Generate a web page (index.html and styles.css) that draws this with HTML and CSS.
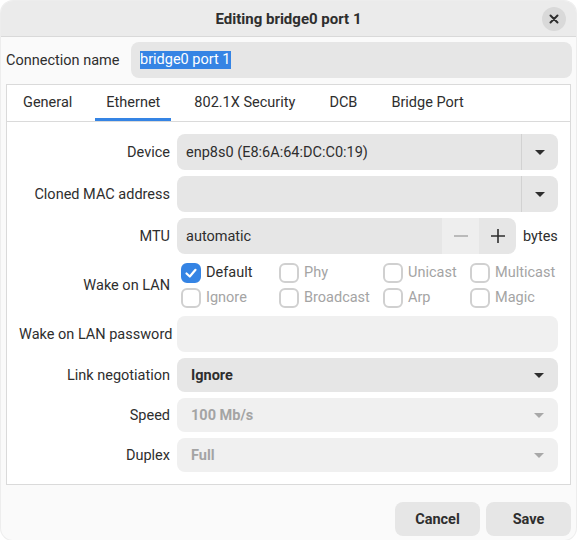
FILE: index.html
```html
<!DOCTYPE html>
<html>
<head>
<meta charset="utf-8">
<link rel="stylesheet" href="styles.css">
</head>
<body>
<div class="window">
  <header class="titlebar">
    <span class="title">Editing bridge0 port 1</span>
    <button class="close" aria-label="Close">
      <svg width="10" height="10" viewBox="0 0 10 10"><path d="M1.5 1.5 L8.5 8.5 M8.5 1.5 L1.5 8.5" stroke="#2e2e2e" stroke-width="2" stroke-linecap="round"/></svg>
    </button>
  </header>
  <div class="content">
    <div class="name-row">
      <span class="label">Connection name</span>
      <div class="entry"><span class="selection">bridge0 port 1</span></div>
    </div>
    <div class="notebook">
      <nav class="tabs">
        <span class="tab">General</span>
        <span class="tab active">Ethernet</span>
        <span class="tab">802.1X Security</span>
        <span class="tab">DCB</span>
        <span class="tab">Bridge Port</span>
      </nav>
      <div class="page">
        <span class="row-label">Device</span>
        <div class="combo">
          <span class="combo-text">enp8s0 (E8:6A:64:DC:C0:19)</span>
          <span class="combo-btn"><svg width="10" height="5" viewBox="0 0 10 5"><path d="M0 0 L10 0 L5 5 Z" fill="#2e2e2e"/></svg></span>
        </div>

        <span class="row-label">Cloned MAC address</span>
        <div class="combo">
          <span class="combo-text"></span>
          <span class="combo-btn"><svg width="10" height="5" viewBox="0 0 10 5"><path d="M0 0 L10 0 L5 5 Z" fill="#2e2e2e"/></svg></span>
        </div>

        <span class="row-label">MTU</span>
        <div class="mtu-row">
          <div class="spin">
            <span class="spin-text">automatic</span>
            <span class="spin-btn minus"><svg width="16" height="16" viewBox="0 0 16 16"><path d="M1 8 H15" stroke="#a8a8a8" stroke-width="1.6"/></svg></span>
            <span class="spin-btn plus"><svg width="16" height="16" viewBox="0 0 16 16"><path d="M1 8 H15 M8 1 V15" stroke="#2e2e2e" stroke-width="1.6"/></svg></span>
          </div>
          <span class="unit">bytes</span>
        </div>

        <span class="row-label">Wake on LAN</span>
        <div class="wol">
          <label class="check"><span class="box checked"><svg width="14" height="14" viewBox="0 0 14 14"><path d="M2.5 7.5 L5.8 10.5 L11.5 3.8" fill="none" stroke="#fff" stroke-width="2.2" stroke-linecap="round" stroke-linejoin="round"/></svg></span><span class="ctext">Default</span></label>
          <label class="check dis"><span class="box"></span><span class="ctext">Phy</span></label>
          <label class="check dis"><span class="box"></span><span class="ctext">Unicast</span></label>
          <label class="check dis"><span class="box"></span><span class="ctext">Multicast</span></label>
          <label class="check dis"><span class="box"></span><span class="ctext">Ignore</span></label>
          <label class="check dis"><span class="box"></span><span class="ctext">Broadcast</span></label>
          <label class="check dis"><span class="box"></span><span class="ctext">Arp</span></label>
          <label class="check dis"><span class="box"></span><span class="ctext">Magic</span></label>
        </div>

        <span class="row-label">Wake on LAN password</span>
        <div class="entry-field disabled"></div>

        <span class="row-label">Link negotiation</span>
        <div class="dropdown">
          <span class="dd-text">Ignore</span>
          <svg width="10" height="5" viewBox="0 0 10 5"><path d="M0 0 L10 0 L5 5 Z" fill="#2e2e2e"/></svg>
        </div>

        <span class="row-label">Speed</span>
        <div class="dropdown disabled">
          <span class="dd-text">100 Mb/s</span>
          <svg width="10" height="5" viewBox="0 0 10 5"><path d="M0 0 L10 0 L5 5 Z" fill="#a8a8a8"/></svg>
        </div>

        <span class="row-label">Duplex</span>
        <div class="dropdown disabled">
          <span class="dd-text">Full</span>
          <svg width="10" height="5" viewBox="0 0 10 5"><path d="M0 0 L10 0 L5 5 Z" fill="#a8a8a8"/></svg>
        </div>
      </div>
    </div>
    <div class="actions">
      <button class="btn">Cancel</button>
      <button class="btn">Save</button>
    </div>
  </div>
</div>
</body>
</html>
```

FILE: styles.css
```css
html, body {
  margin: 0;
  padding: 0;
  background: #ffffff;
}

body {
  font-family: Roboto, "Open Sans", sans-serif;
  font-size: 14.5px;
  color: #2e2e2e;
}

.window {
  margin: 1px 1px 0 1px;
  width: 575px;
  height: 539px;
  border-radius: 12px;
  overflow: hidden;
  background: #fafafa;
  box-shadow: 0 0 0 1px rgba(0, 0, 0, 0.07);
  display: flex;
  flex-direction: column;
}

.titlebar {
  height: 35px;
  flex: 0 0 35px;
  background: #ebebeb;
  border-bottom: 1px solid #d9d9d9;
  display: flex;
  align-items: center;
  justify-content: center;
  position: relative;
}

.title {
  font-weight: 700;
  font-size: 15px;
  color: #2e2e2e;
}

.close {
  position: absolute;
  right: 10px;
  top: 6px;
  width: 24px;
  height: 24px;
  border-radius: 50%;
  border: none;
  background: #d9d9d9;
  display: flex;
  align-items: center;
  justify-content: center;
  padding: 0;
}

.content {
  padding: 5px 5px 0 5px;
  display: flex;
  flex-direction: column;
}

.name-row {
  display: grid;
  grid-template-columns: 125px 1fr;
  align-items: center;
  height: 36px;
}

.label {
  white-space: nowrap;
}

.entry {
  height: 36px;
  border-radius: 8px;
  background: #e6e6e6;
  margin-right: -1px;
  display: flex;
  align-items: center;
  padding-left: 9px;
}

.selection {
  background: #3584e4;
  color: #ffffff;
  line-height: 18px;
  padding: 0;
}

.notebook {
  margin-top: 6px;
  border: 1px solid #dadada;
  background: #ffffff;
}

.tabs {
  display: flex;
  height: 36px;
  border-bottom: 1px solid #dadada;
  padding-left: 5px;
  gap: 12px;
}

.tab {
  padding: 0 11px;
  display: flex;
  align-items: center;
  box-sizing: border-box;
  height: 36px;
  border-bottom: 3px solid transparent;
  padding-top: 2px;
  color: #2e2e2e;
}

.tab.active {
  border-bottom-color: #3584e4;
}

.page {
  padding: 12px;
  display: grid;
  grid-template-columns: 151px 1fr;
  column-gap: 7px;
  row-gap: 6px;
  align-items: center;
}

.row-label {
  text-align: right;
  white-space: nowrap;
}

.combo {
  height: 36px;
  border-radius: 8px;
  background: #e6e6e6;
  display: flex;
  align-items: center;
}

.combo-text {
  flex: 1;
  padding-left: 9px;
}

.combo-btn {
  width: 37px;
  height: 36px;
  box-sizing: border-box;
  border-left: 1px solid #d2d2d2;
  display: flex;
  align-items: center;
  justify-content: center;
}

.mtu-row {
  display: flex;
  align-items: center;
  gap: 7px;
}

.spin {
  flex: 1;
  height: 36px;
  border-radius: 8px;
  background: #e6e6e6;
  display: flex;
  align-items: center;
  overflow: hidden;
}

.spin-text {
  flex: 1;
  padding-left: 9px;
}

.spin-btn {
  width: 37px;
  height: 36px;
  display: flex;
  align-items: center;
  justify-content: center;
}

.spin-btn.minus {
  background: #eeeeee;
}

.unit {
  width: 35px;
}

.wol {
  display: grid;
  grid-template-columns: 98px 104px 87px auto;
  grid-auto-rows: 25px;
  height: 50px;
  padding-left: 4px;
  align-items: center;
}

.check {
  display: flex;
  align-items: center;
  gap: 5px;
}

.box {
  width: 20px;
  height: 20px;
  box-sizing: border-box;
  border-radius: 6px;
  border: 2px solid #d0d0d0;
  display: flex;
  align-items: center;
  justify-content: center;
}

.box.checked {
  background: #3584e4;
  border-color: #3584e4;
}

.check.dis .ctext {
  color: #a4a4a4;
}

.entry-field {
  height: 36px;
  border-radius: 8px;
  background: #e6e6e6;
}

.entry-field.disabled {
  background: #f0f0f0;
}

.dropdown {
  height: 34px;
  border-radius: 8px;
  background: #e6e6e6;
  display: flex;
  align-items: center;
  justify-content: space-between;
  padding: 0 14px 0 14px;
  font-weight: 700;
}

.dropdown.disabled {
  background: #f0f0f0;
  color: #a4a4a4;
}

.actions {
  margin-top: 17px;
  display: flex;
  justify-content: flex-end;
  gap: 6px;
}

.btn {
  width: 85px;
  height: 34px;
  border: none;
  border-radius: 8px;
  background: #e6e6e6;
  font-family: inherit;
  font-size: 14.5px;
  font-weight: 700;
  color: #2e2e2e;
  padding: 0;
}
```
